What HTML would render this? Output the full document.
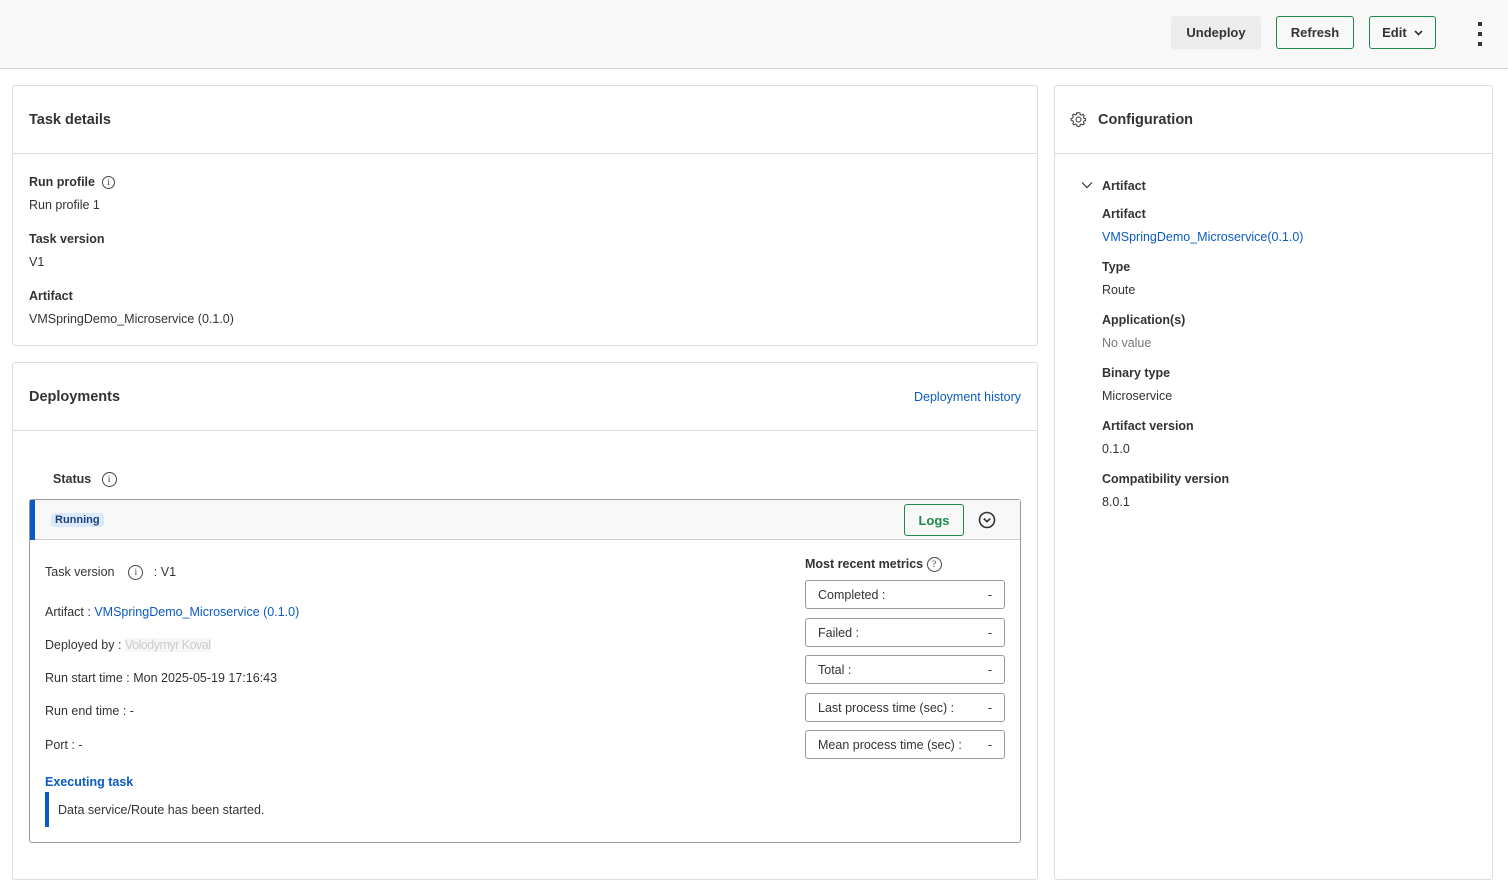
<!DOCTYPE html>
<html><head><style>
*{box-sizing:border-box;margin:0;padding:0}
body{width:1508px;height:882px;overflow:hidden;background:#fff;font-family:"Liberation Sans",sans-serif;font-size:12.5px;color:#333;position:relative}
.a{position:absolute;white-space:nowrap}
.t{margin-top:1px}
.b{font-weight:bold;color:#333}
.lk{color:#0a5bc4}
.card{position:absolute;border:1px solid #dcdcdc;border-radius:3px;background:#fff}
.btn{position:absolute;height:33px;border-radius:3px;font-weight:bold;font-size:13px;display:flex;align-items:center;justify-content:center;color:#333}
.g{border:1px solid #1e8a4a}
.met{position:absolute;left:805px;width:200px;height:29px;border:1px solid #999;border-radius:3px;padding:0 12px;display:flex;align-items:center;justify-content:space-between}
.ic{display:inline-block;width:13px;height:13px;border:1px solid #444;border-radius:50%;font-size:9px;text-align:center;line-height:11px;font-family:"Liberation Serif",serif;vertical-align:middle}
</style></head><body>
<div class="a" style="left:0;top:0;width:1508px;height:69px;background:#f8f8f8;border-bottom:1px solid #d6d6d6"></div>
<div class="btn" style="left:1171px;top:16px;width:90px;background:#ececec">Undeploy</div>
<div class="btn g" style="left:1276px;top:16px;width:78px">Refresh</div>
<div class="btn g" style="left:1369px;top:16px;width:67px">Edit&nbsp;&nbsp;<svg width="9" height="6" viewBox="0 0 9 6"><path d="M1 1l3.5 3.5L8 1" stroke="#333" stroke-width="1.6" fill="none"/></svg></div>
<div class="a" style="left:1478px;top:22px;width:4px;height:4px;background:#333"></div>
<div class="a" style="left:1478px;top:32px;width:4px;height:4px;background:#333"></div>
<div class="a" style="left:1478px;top:42px;width:4px;height:4px;background:#333"></div>

<div class="card" style="left:12px;top:85px;width:1026px;height:261px"></div>
<div class="a" style="left:13px;top:153px;width:1024px;height:1px;background:#dcdcdc"></div>
<div class="a b" style="left:29px;top:112px;font-size:14.5px">Task details</div>
<div class="a b" style="left:29px;top:175px">Run profile &nbsp;<span class="ic" style="font-weight:normal">i</span></div>
<div class="a" style="left:29px;top:198px">Run profile 1</div>
<div class="a b" style="left:29px;top:232px">Task version</div>
<div class="a" style="left:29px;top:255px">V1</div>
<div class="a b" style="left:29px;top:289px">Artifact</div>
<div class="a" style="left:29px;top:312px">VMSpringDemo_Microservice (0.1.0)</div>

<div class="card" style="left:12px;top:362px;width:1026px;height:518px"></div>
<div class="a" style="left:13px;top:430px;width:1024px;height:1px;background:#dcdcdc"></div>
<div class="a b" style="left:29px;top:389px;font-size:14.5px">Deployments</div>
<div class="a lk" style="right:487px;top:390px">Deployment history</div>
<div class="a b" style="left:53px;top:472px">Status &nbsp;&nbsp;<span class="ic" style="font-weight:normal;width:15px;height:15px;line-height:13px">i</span></div>

<div class="a" style="left:29px;top:499px;width:992px;height:344px;border:1px solid #999;border-radius:3px"></div>
<div class="a" style="left:30px;top:500px;width:990px;height:40px;background:#f8f8f8;border-bottom:1px solid #ccc"></div>
<div class="a" style="left:30px;top:500px;width:5px;height:40px;background:#0a5bc4"></div>
<div class="a" style="left:51px;top:513px;background:#dbeafb;color:#1d3f7a;font-weight:bold;font-size:11px;padding:1px 4px;border-radius:3px">Running</div>
<div class="btn g" style="left:904px;top:504px;width:60px;height:32px;color:#1e8a4a">Logs</div>
<svg class="a" style="left:978px;top:511px" width="18" height="18" viewBox="0 0 18 18"><circle cx="9" cy="9" r="7.5" stroke="#333" stroke-width="1.6" fill="none"/><path d="M5.8 7.6L9 10.6l3.2-3" stroke="#333" stroke-width="1.7" fill="none"/></svg>

<div class="a" style="left:45px;top:565px">Task version &nbsp;&nbsp;&nbsp;<span class="ic" style="width:15px;height:15px;line-height:13px">i</span>&nbsp;&nbsp; : V1</div>
<div class="a" style="left:45px;top:605px">Artifact : <span class="lk">VMSpringDemo_Microservice (0.1.0)</span></div>
<div class="a" style="left:45px;top:638px">Deployed by : <span style="color:#ccc;background:#f6f6f6;letter-spacing:-0.5px">Volodymyr Koval</span></div>
<div class="a" style="left:45px;top:671px">Run start time : Mon 2025-05-19 17:16:43</div>
<div class="a" style="left:45px;top:704px">Run end time : -</div>
<div class="a" style="left:45px;top:738px">Port : -</div>
<div class="a b" style="left:45px;top:775px;color:#0a5bc4">Executing task</div>
<div class="a" style="left:45px;top:792px;width:4px;height:35px;background:#0a5bc4"></div>
<div class="a" style="left:58px;top:803px">Data service/Route has been started.</div>

<div class="a b" style="left:805px;top:557px">Most recent metrics <span class="ic" style="font-weight:normal;width:15px;height:15px;line-height:13px">?</span></div>
<div class="met" style="top:580px"><span>Completed :</span><span>-</span></div>
<div class="met" style="top:618px"><span>Failed :</span><span>-</span></div>
<div class="met" style="top:655px"><span>Total :</span><span>-</span></div>
<div class="met" style="top:693px"><span>Last process time (sec) :</span><span>-</span></div>
<div class="met" style="top:730px"><span>Mean process time (sec) :</span><span>-</span></div>

<div class="card" style="left:1054px;top:85px;width:439px;height:795px"></div>
<div class="a" style="left:1055px;top:153px;width:437px;height:1px;background:#dcdcdc"></div>
<svg class="a" style="left:1070px;top:111px" width="17" height="17" viewBox="0 0 24 24"><path d="M12 2.5l2 .3.5 2.4 1.6.8 2.2-1.2 1.7 1.6-1 2.3.7 1.7 2.4.6v2.4l-2.4.6-.7 1.7 1 2.3-1.7 1.6-2.2-1.2-1.6.8-.5 2.4-2 .3-2-.3-.5-2.4-1.6-.8-2.2 1.2-1.700-1.6 1-2.3-.7-1.7L1.5 13v-2.4l2.4-.6.7-1.7-1-2.3 1.7-1.6 2.2 1.2 1.6-.8.5-2.4z" stroke="#333" stroke-width="1.4" fill="none"/><circle cx="12" cy="12" r="3.5" stroke="#333" stroke-width="1.4" fill="none"/></svg>
<div class="a b" style="left:1098px;top:112px;font-size:14.5px">Configuration</div>
<svg class="a" style="left:1081px;top:181px" width="12" height="8" viewBox="0 0 12 8"><path d="M1 1.5l5 5 5-5" stroke="#333" stroke-width="1.2" fill="none"/></svg>
<div class="a b" style="left:1102px;top:179px">Artifact</div>
<div class="a b" style="left:1102px;top:207px">Artifact</div>
<div class="a lk" style="left:1102px;top:230px">VMSpringDemo_Microservice(0.1.0)</div>
<div class="a b" style="left:1102px;top:260px">Type</div>
<div class="a" style="left:1102px;top:283px">Route</div>
<div class="a b" style="left:1102px;top:313px">Application(s)</div>
<div class="a" style="left:1102px;top:336px;color:#777">No value</div>
<div class="a b" style="left:1102px;top:366px">Binary type</div>
<div class="a" style="left:1102px;top:389px">Microservice</div>
<div class="a b" style="left:1102px;top:419px">Artifact version</div>
<div class="a" style="left:1102px;top:442px">0.1.0</div>
<div class="a b" style="left:1102px;top:472px">Compatibility version</div>
<div class="a" style="left:1102px;top:495px">8.0.1</div>
</body></html>
